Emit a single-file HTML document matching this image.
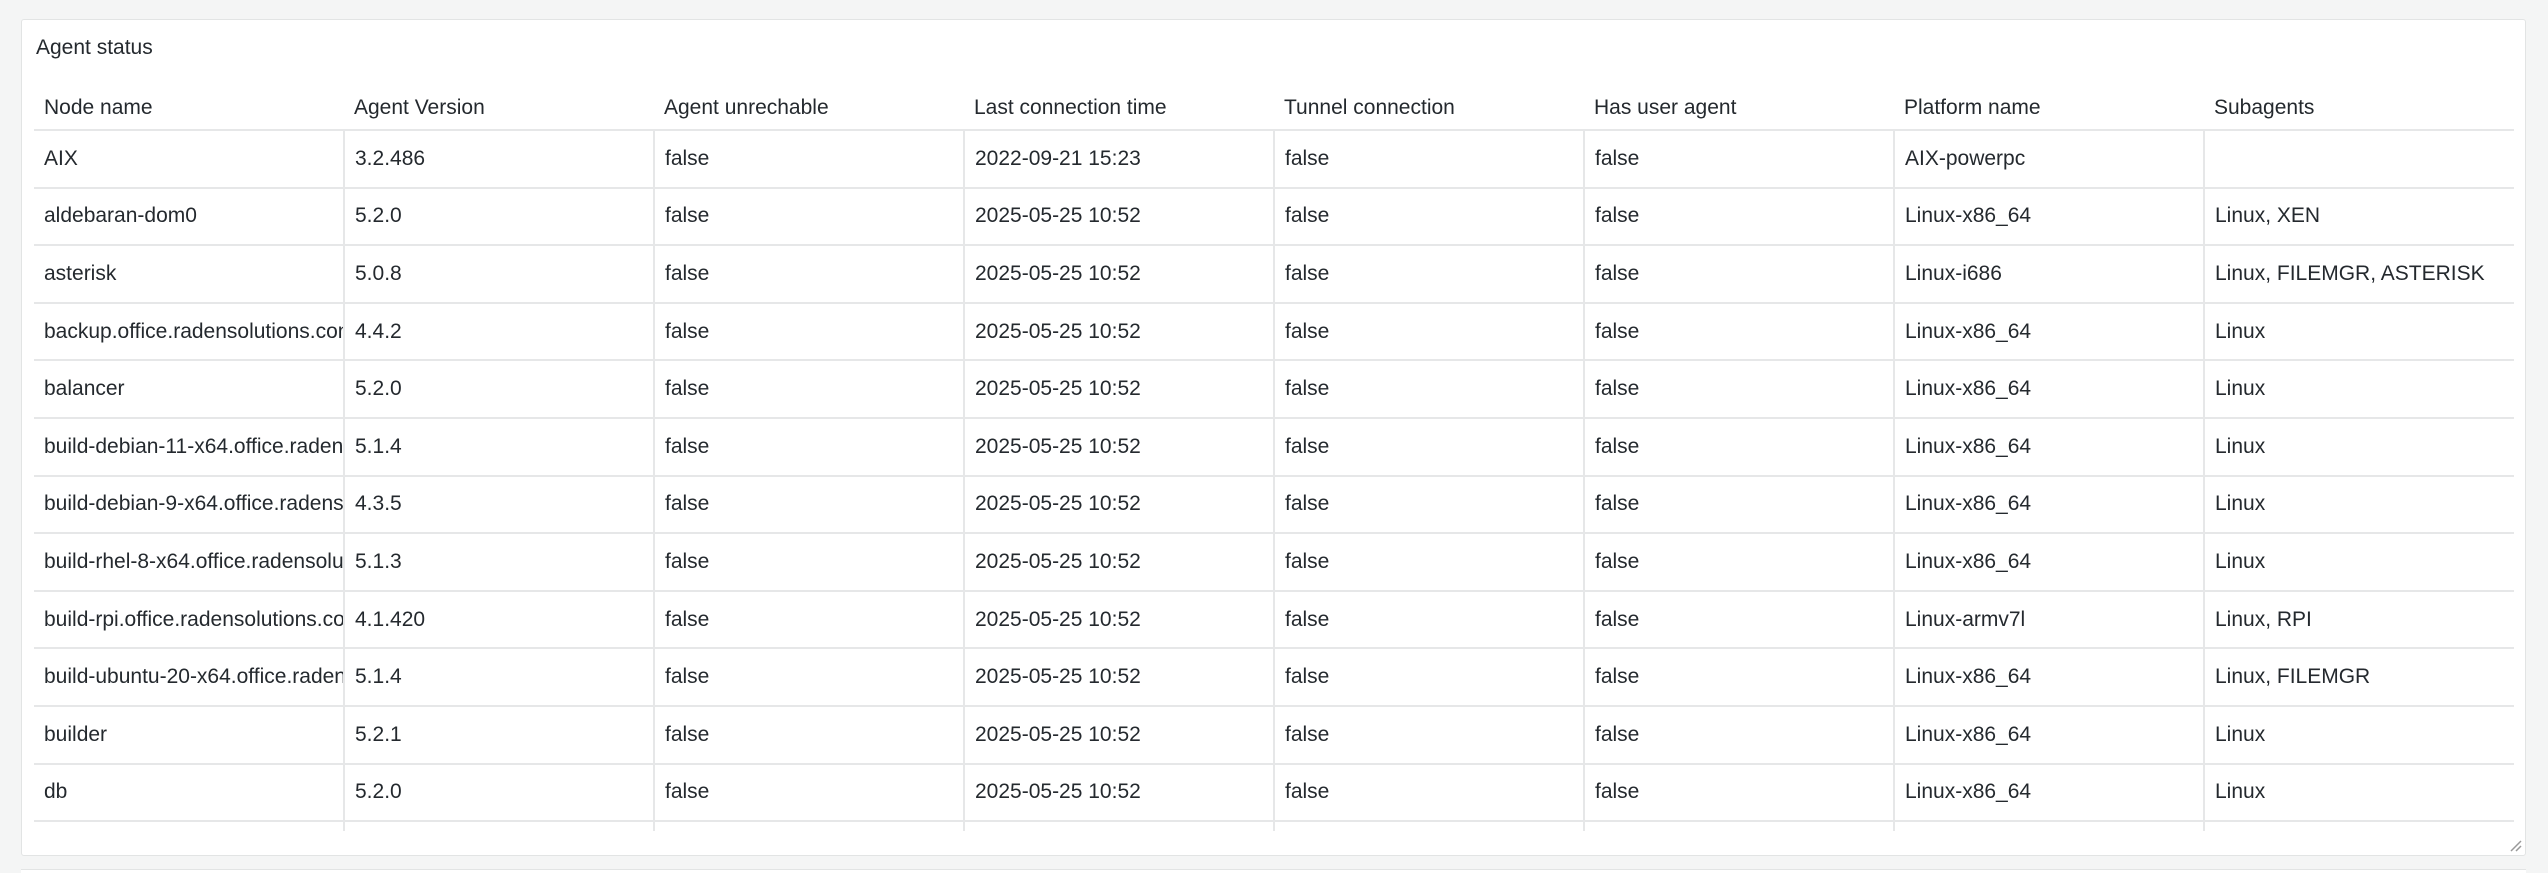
<!DOCTYPE html>
<html><head><meta charset="utf-8"><style>
html,body{margin:0;padding:0;background:#f4f5f5;width:2548px;height:873px;overflow:hidden;font-family:"Liberation Sans",sans-serif;color:#24292e}
.panel{position:absolute;left:21px;top:19px;width:2505px;height:837px;background:#fff;border:1px solid #e2e4e4;border-radius:3px;box-sizing:border-box}
.panel2{position:absolute;left:21px;top:869px;width:2505px;height:4px;background:#fff;border-top:1px solid #e2e4e4;box-sizing:border-box}
.title{position:absolute;left:14px;top:13px;font-size:21px;line-height:30px}
.tw{position:absolute;left:12px;top:60px;width:2480px;height:751px;overflow:hidden}
table{border-collapse:collapse;table-layout:fixed;width:2480px;font-size:21px}
td,th{width:310px;box-sizing:border-box;padding:0 0 0 10px;white-space:nowrap;overflow:hidden;text-align:left;font-weight:normal}
th{height:50px;border-bottom:2px solid #e6e7e8;vertical-align:middle;padding-top:6px}
td{height:57.6px;border-bottom:2px solid #e6e7e8;border-left:2px solid #e6e7e8}
td:first-child{border-left:none}
.grip{position:absolute;right:3px;bottom:3px;width:14px;height:14px}
</style></head><body>
<div class="panel">
<div class="title">Agent status</div>
<div class="tw"><table>
<tr><th>Node name</th><th>Agent Version</th><th>Agent unrechable</th><th>Last connection time</th><th>Tunnel connection</th><th>Has user agent</th><th>Platform name</th><th>Subagents</th></tr>
<tr><td>AIX</td><td>3.2.486</td><td>false</td><td>2022-09-21 15:23</td><td>false</td><td>false</td><td>AIX-powerpc</td><td></td></tr>
<tr><td>aldebaran-dom0</td><td>5.2.0</td><td>false</td><td>2025-05-25 10:52</td><td>false</td><td>false</td><td>Linux-x86_64</td><td>Linux, XEN</td></tr>
<tr><td>asterisk</td><td>5.0.8</td><td>false</td><td>2025-05-25 10:52</td><td>false</td><td>false</td><td>Linux-i686</td><td>Linux, FILEMGR, ASTERISK</td></tr>
<tr><td>backup.office.radensolutions.com</td><td>4.4.2</td><td>false</td><td>2025-05-25 10:52</td><td>false</td><td>false</td><td>Linux-x86_64</td><td>Linux</td></tr>
<tr><td>balancer</td><td>5.2.0</td><td>false</td><td>2025-05-25 10:52</td><td>false</td><td>false</td><td>Linux-x86_64</td><td>Linux</td></tr>
<tr><td>build-debian-11-x64.office.radensolutions.com</td><td>5.1.4</td><td>false</td><td>2025-05-25 10:52</td><td>false</td><td>false</td><td>Linux-x86_64</td><td>Linux</td></tr>
<tr><td>build-debian-9-x64.office.radensolutions.com</td><td>4.3.5</td><td>false</td><td>2025-05-25 10:52</td><td>false</td><td>false</td><td>Linux-x86_64</td><td>Linux</td></tr>
<tr><td>build-rhel-8-x64.office.radensolutions.com</td><td>5.1.3</td><td>false</td><td>2025-05-25 10:52</td><td>false</td><td>false</td><td>Linux-x86_64</td><td>Linux</td></tr>
<tr><td>build-rpi.office.radensolutions.com</td><td>4.1.420</td><td>false</td><td>2025-05-25 10:52</td><td>false</td><td>false</td><td>Linux-armv7l</td><td>Linux, RPI</td></tr>
<tr><td>build-ubuntu-20-x64.office.radensolutions.com</td><td>5.1.4</td><td>false</td><td>2025-05-25 10:52</td><td>false</td><td>false</td><td>Linux-x86_64</td><td>Linux, FILEMGR</td></tr>
<tr><td>builder</td><td>5.2.1</td><td>false</td><td>2025-05-25 10:52</td><td>false</td><td>false</td><td>Linux-x86_64</td><td>Linux</td></tr>
<tr><td>db</td><td>5.2.0</td><td>false</td><td>2025-05-25 10:52</td><td>false</td><td>false</td><td>Linux-x86_64</td><td>Linux</td></tr>
<tr><td>dev</td><td>5.2.0</td><td>false</td><td>2025-05-25 10:52</td><td>false</td><td>false</td><td>Linux-x86_64</td><td>Linux</td></tr>
</table></div>
<svg class="grip" viewBox="0 0 14 14"><path d="M13 3L3 13M13 8L8 13" stroke="#999" stroke-width="1.5"/></svg>
</div>
<div class="panel2"></div>
</body></html>
